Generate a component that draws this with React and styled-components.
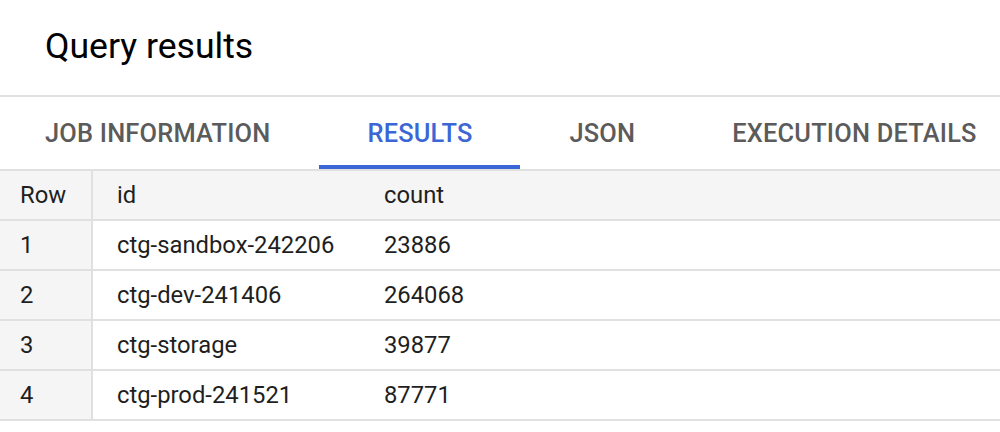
import React from "react";
import styled, { createGlobalStyle } from "styled-components";

const GlobalStyle = createGlobalStyle`
  html, body {
    margin: 0;
    padding: 0;
    background: #ffffff;
    font-family: Roboto, "Liberation Sans", Arial, sans-serif;
    overflow: hidden;
  }
`;

const Page = styled.div`
  width: 1000px;
  height: 432px;
  background: #fff;
  overflow: hidden;
`;

const Title = styled.h1`
  margin: 0;
  height: 97px;
  box-sizing: border-box;
  padding: 25px 0 0 45px;
  font-size: 35.6px;
  line-height: 42px;
  font-weight: 400;
  color: #000;
  border-bottom: 2px solid #e0e0e0;
`;

const TabBar = styled.div`
  display: flex;
  height: 74px;
  box-sizing: border-box;
  margin-left: -3px;
  gap: 1px;
  border-bottom: 2px solid #e0e0e0;
`;

const Tab = styled.div`
  flex: none;
  display: flex;
  align-items: center;
  padding: 0 48px;
  box-sizing: border-box;
  font-size: 25.4px;
  font-weight: 500;
  letter-spacing: 0.2px;
  color: ${(p) => (p.$active ? "#3b67d6" : "#5b5b5b")};
  border-top: 4px solid transparent;
  border-bottom: 4px solid ${(p) => (p.$active ? "#3b67d6" : "transparent")};
  white-space: nowrap;
`;

const Table = styled.div`
  display: grid;
  grid-template-columns: 93px 267px 1fr;
`;

const Cell = styled.div`
  height: 48px;
  display: flex;
  align-items: center;
  box-sizing: content-box;
  padding-left: ${(p) => (p.$first ? "20px" : "24px")};
  font-size: 23.8px;
  color: #1f1f1f;
  background: ${(p) => (p.$gray ? "#f5f5f5" : "#fff")};
  border-bottom: 2px solid #e0e0e0;
  border-right: ${(p) => (p.$first ? "2px solid #e0e0e0" : "none")};
  white-space: nowrap;
`;

const rows = [
  ["1", "ctg-sandbox-242206", "23886"],
  ["2", "ctg-dev-241406", "264068"],
  ["3", "ctg-storage", "39877"],
  ["4", "ctg-prod-241521", "87771"],
];

const tabs = ["JOB INFORMATION", "RESULTS", "JSON", "EXECUTION DETAILS"];

export default function App() {
  return (
    <Page>
      <GlobalStyle />
      <Title>Query results</Title>
      <TabBar>
        {tabs.map((t) => (
          <Tab key={t} $active={t === "RESULTS"}>
            {t}
          </Tab>
        ))}
      </TabBar>
      <Table>
        <Cell $first $gray>Row</Cell>
        <Cell $gray>id</Cell>
        <Cell $gray>count</Cell>
        {rows.map((r) => (
          <React.Fragment key={r[0]}>
            <Cell $first $gray>{r[0]}</Cell>
            <Cell>{r[1]}</Cell>
            <Cell>{r[2]}</Cell>
          </React.Fragment>
        ))}
      </Table>
    </Page>
  );
}
